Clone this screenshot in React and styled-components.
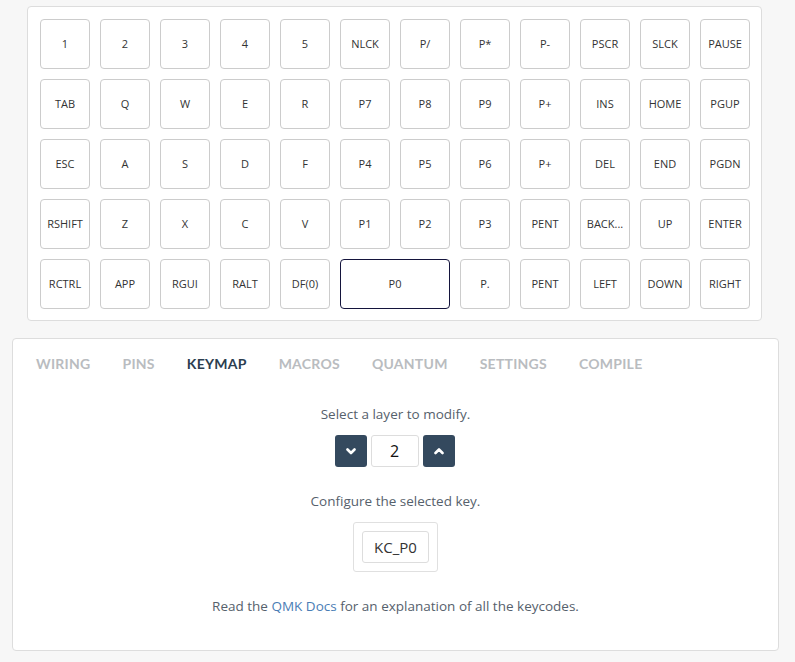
import React from "react";
import styled, { createGlobalStyle } from "styled-components";

const Global = createGlobalStyle`
  html, body { margin: 0; padding: 0; background: #f7f7f7; }
  body { font-family: "Open Sans", "Noto Sans", sans-serif; }
  * { box-sizing: border-box; }
`;

const Page = styled.div`
  width: 795px;
  height: 662px;
  padding: 6px 0 0 12px;
  display: flex;
  flex-direction: column;
`;

const KeyboardCard = styled.div`
  margin-left: 15px;
  width: 735px;
  background: #fff;
  border: 1px solid #dddddd;
  border-radius: 4px;
  padding: 12px 11px 11px 12px;
`;

const KeyGrid = styled.div`
  display: grid;
  grid-template-columns: repeat(12, 50px);
  grid-auto-rows: 50px;
  gap: 10px;
`;

const Key = styled.div`
  grid-column: span ${(p) => p.$span || 1};
  border: 1px solid ${(p) => (p.$selected ? "#14143c" : "#cccccc")};
  border-radius: 4px;
  background: #fff;
  display: flex;
  align-items: center;
  justify-content: center;
  padding-bottom: 2px;
  font-size: 11px;
  color: #333;
  white-space: nowrap;
  overflow: hidden;
`;

const PanelCard = styled.div`
  margin-top: 17px;
  width: 767px;
  height: 313px;
  background: #fff;
  border: 1px solid #dddddd;
  border-radius: 4px;
  padding-top: 17px;
  display: flex;
  flex-direction: column;
`;

const Tabs = styled.div`
  display: flex;
  padding: 0 7px;
`;

const Tab = styled.div`
  padding: 0 16px;
  font-family: Lato, "Open Sans", sans-serif;
  font-weight: 700;
  font-size: 14px;
  letter-spacing: 0.25px;
  line-height: 16px;
  color: ${(p) => (p.$active ? "#2c3e50" : "#b9bcc0")};
`;

const Body = styled.div`
  display: flex;
  flex-direction: column;
  align-items: center;
  padding-top: 33px;
`;

const Hint = styled.div`
  font-size: 13.5px;
  line-height: 18px;
  color: #56616c;
  margin-top: ${(p) => p.$mt || 0}px;
`;

const Link = styled.span`
  color: #4a7db5;
`;

const LayerRow = styled.div`
  display: flex;
  gap: 4px;
  margin-top: 12px;
  margin-right: 2px;
`;

const StepButton = styled.div`
  width: 32px;
  height: 32px;
  border-radius: 3px;
  background: #34495e;
  display: flex;
  align-items: center;
  justify-content: center;
`;

const LayerInput = styled.div`
  width: 48px;
  height: 32px;
  border: 1px solid #dddddd;
  border-radius: 3px;
  display: flex;
  align-items: center;
  justify-content: center;
  font-size: 16px;
  color: #111;
`;

const KeyBox = styled.div`
  margin-top: 12px;
  width: 85px;
  height: 50px;
  border: 1px solid #e0e0e0;
  border-radius: 3px;
  padding: 8px;
`;

const KeyCode = styled.div`
  width: 67px;
  height: 32px;
  border: 1px solid #dddddd;
  border-radius: 3px;
  display: flex;
  align-items: center;
  justify-content: center;
  font-size: 15px;
  color: #333;
`;

const Chevron = ({ up }) => (
  <svg width="10" height="8" viewBox="0 0 10 8">
    <polyline
      points={up ? "1.5,6 5,2.5 8.5,6" : "1.5,2.5 5,6 8.5,2.5"}
      fill="none"
      stroke="#fff"
      strokeWidth="2.6"
      strokeLinecap="round"
      strokeLinejoin="round"
    />
  </svg>
);

const rows = [
  ["1", "2", "3", "4", "5", "NLCK", "P/", "P*", "P-", "PSCR", "SLCK", "PAUSE"],
  ["TAB", "Q", "W", "E", "R", "P7", "P8", "P9", "P+", "INS", "HOME", "PGUP"],
  ["ESC", "A", "S", "D", "F", "P4", "P5", "P6", "P+", "DEL", "END", "PGDN"],
  ["RSHIFT", "Z", "X", "C", "V", "P1", "P2", "P3", "PENT", "BACK...", "UP", "ENTER"],
  ["RCTRL", "APP", "RGUI", "RALT", "DF(0)", { l: "P0", span: 2, sel: true }, "P.", "PENT", "LEFT", "DOWN", "RIGHT"],
];

const tabs = ["WIRING", "PINS", "KEYMAP", "MACROS", "QUANTUM", "SETTINGS", "COMPILE"];

export default function App() {
  return (
    <>
      <Global />
      <Page>
        <KeyboardCard>
          <KeyGrid>
            {rows.flatMap((row, r) =>
              row.map((k, i) =>
                typeof k === "string" ? (
                  <Key key={`${r}-${i}`}>{k}</Key>
                ) : (
                  <Key key={`${r}-${i}`} $span={k.span} $selected={k.sel}>
                    {k.l}
                  </Key>
                )
              )
            )}
          </KeyGrid>
        </KeyboardCard>
        <PanelCard>
          <Tabs>
            {tabs.map((t) => (
              <Tab key={t} $active={t === "KEYMAP"}>
                {t}
              </Tab>
            ))}
          </Tabs>
          <Body>
            <Hint>Select a layer to modify.</Hint>
            <LayerRow>
              <StepButton>
                <Chevron />
              </StepButton>
              <LayerInput>2</LayerInput>
              <StepButton>
                <Chevron up />
              </StepButton>
            </LayerRow>
            <Hint $mt={25}>Configure the selected key.</Hint>
            <KeyBox>
              <KeyCode>KC_P0</KeyCode>
            </KeyBox>
            <Hint $mt={25}>
              Read the <Link>QMK Docs</Link> for an explanation of all the keycodes.
            </Hint>
          </Body>
        </PanelCard>
      </Page>
    </>
  );
}
